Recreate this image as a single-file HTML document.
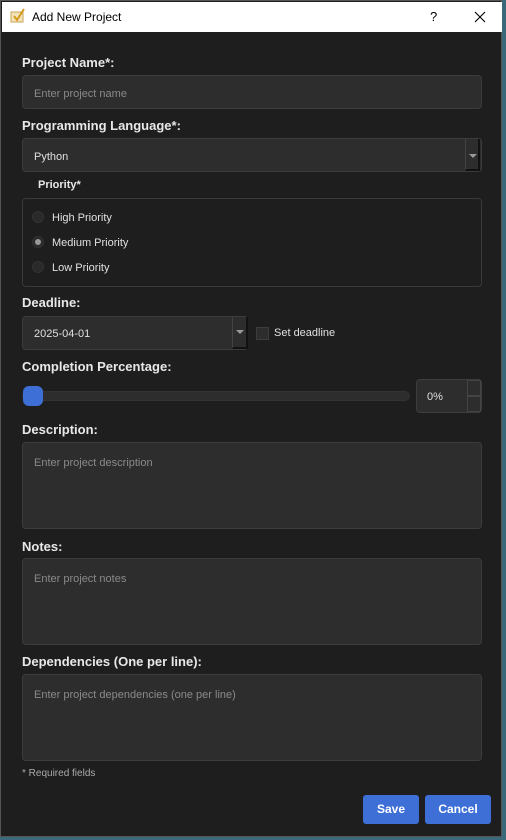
<!DOCTYPE html>
<html><head><style>
*{box-sizing:border-box;margin:0;padding:0}
body{width:506px;height:840px;background:#3a6a7a;position:relative;overflow:hidden;font-family:"Liberation Sans",sans-serif}
.win{position:absolute;left:0;top:0;width:502px;height:837px;background:#1e1e1e;border:1px solid #555}
.title{position:absolute;left:2px;top:2px;width:500px;height:30px;background:#fff;color:#000;font-size:12px}
.abs{position:absolute}
.lbl{position:absolute;left:22px;color:#e8e8e8;font-weight:bold;font-size:13px}
.box{position:absolute;left:22px;width:460px;background:#2d2d2d;border:1px solid #3c3c3c;border-radius:4px}
.ph{position:absolute;color:#8a8a8a;font-size:11px}
.txt{position:absolute;color:#e0e0e0;font-size:11px}
.radio{position:absolute;left:32px;width:12px;height:12px;border-radius:50%;background:#2a2a2a;border:1px solid #333}
.btn{position:absolute;top:795px;height:29px;background:#3d6fd6;border-radius:3px;color:#fff;font-weight:bold;font-size:12px;text-align:center;line-height:29px}
</style></head><body>
<div class="win"></div>
<div class="title">
<svg class="abs" style="left:8px;top:6px" width="16" height="16" viewBox="0 0 16 16"><rect x="1" y="4" width="12" height="10" fill="#f2e4b8" stroke="#c9a55a"/><path d="M4 8l3 4 7-11" stroke="#d69a1f" stroke-width="2" fill="none"/></svg>
<div class="abs" style="left:30px;top:8px">Add New Project</div>
<div class="abs" style="left:428px;top:7px;font-size:13px">?</div>
<svg class="abs" style="left:472px;top:9px" width="12" height="12" viewBox="0 0 12 12"><path d="M1 1L11 11M11 1L1 11" stroke="#000" stroke-width="1.1"/></svg>
</div>
<div class="lbl" style="top:55px">Project Name*:</div>
<div class="box" style="top:75px;height:34px"></div>
<div class="ph" style="left:34px;top:88px">Enter project name</div>
<div class="lbl" style="top:118px">Programming Language*:</div>
<div class="box" style="top:138px;height:34px"></div>
<div class="abs" style="left:465px;top:139px;width:15px;height:32px;border-left:1px solid #444;border-right:2px solid #111;border-bottom:2px solid #111"></div>
<div class="abs" style="left:469px;top:154px;border:4px solid transparent;border-top:4px solid #999"></div>
<div class="txt" style="left:34px;top:151px">Python</div>
<div class="abs" style="left:38px;top:179px;color:#e8e8e8;font-weight:bold;font-size:11px">Priority*</div>
<div class="abs" style="left:22px;top:198px;width:460px;height:89px;border:1px solid #3a3a3a;border-radius:4px"></div>
<div class="radio" style="top:211px"></div><div class="txt" style="left:52px;top:212px">High Priority</div>
<div class="radio" style="top:236px"></div><div class="abs" style="left:35px;top:239px;width:6px;height:6px;border-radius:50%;background:#999"></div><div class="txt" style="left:52px;top:237px">Medium Priority</div>
<div class="radio" style="top:261px"></div><div class="txt" style="left:52px;top:262px">Low Priority</div>
<div class="lbl" style="top:295px">Deadline:</div>
<div class="abs" style="left:22px;top:316px;width:226px;height:34px;background:#2d2d2d;border:1px solid #3c3c3c;border-radius:4px"></div>
<div class="abs" style="left:232px;top:317px;width:16px;height:32px;border-left:1px solid #444;border-right:2px solid #111;border-bottom:2px solid #111"></div>
<div class="abs" style="left:236px;top:330px;border:4px solid transparent;border-top:4px solid #999"></div>
<div class="txt" style="left:34px;top:328px">2025-04-01</div>
<div class="abs" style="left:256px;top:327px;width:13px;height:13px;background:#2d2d2d;border:1px solid #3c3c3c"></div>
<div class="txt" style="left:274px;top:327px">Set deadline</div>
<div class="lbl" style="top:359px">Completion Percentage:</div>
<div class="abs" style="left:22px;top:391px;width:388px;height:10px;background:#2d2d2d;border:1px solid #333;border-radius:5px"></div>
<div class="abs" style="left:23px;top:386px;width:20px;height:20px;background:#3d6fd6;border-radius:6px"></div>
<div class="abs" style="left:416px;top:379px;width:66px;height:34px;background:#2d2d2d;border:1px solid #3c3c3c;border-radius:4px"></div>
<div class="abs" style="left:467px;top:380px;width:14px;height:16px;border:1px solid #444"></div>
<div class="abs" style="left:467px;top:396px;width:14px;height:16px;border:1px solid #444"></div>
<div class="txt" style="left:427px;top:391px">0%</div>
<div class="lbl" style="top:422px">Description:</div>
<div class="box" style="top:442px;height:87px"></div>
<div class="ph" style="left:34px;top:457px">Enter project description</div>
<div class="lbl" style="top:539px">Notes:</div>
<div class="box" style="top:558px;height:87px"></div>
<div class="ph" style="left:34px;top:573px">Enter project notes</div>
<div class="lbl" style="top:654px">Dependencies (One per line):</div>
<div class="box" style="top:674px;height:87px"></div>
<div class="ph" style="left:34px;top:689px">Enter project dependencies (one per line)</div>
<div class="abs" style="left:22px;top:768px;color:#aaa;font-size:10px">* Required fields</div>
<div class="btn" style="left:363px;width:56px">Save</div>
<div class="btn" style="left:425px;width:66px">Cancel</div>
</body></html>
